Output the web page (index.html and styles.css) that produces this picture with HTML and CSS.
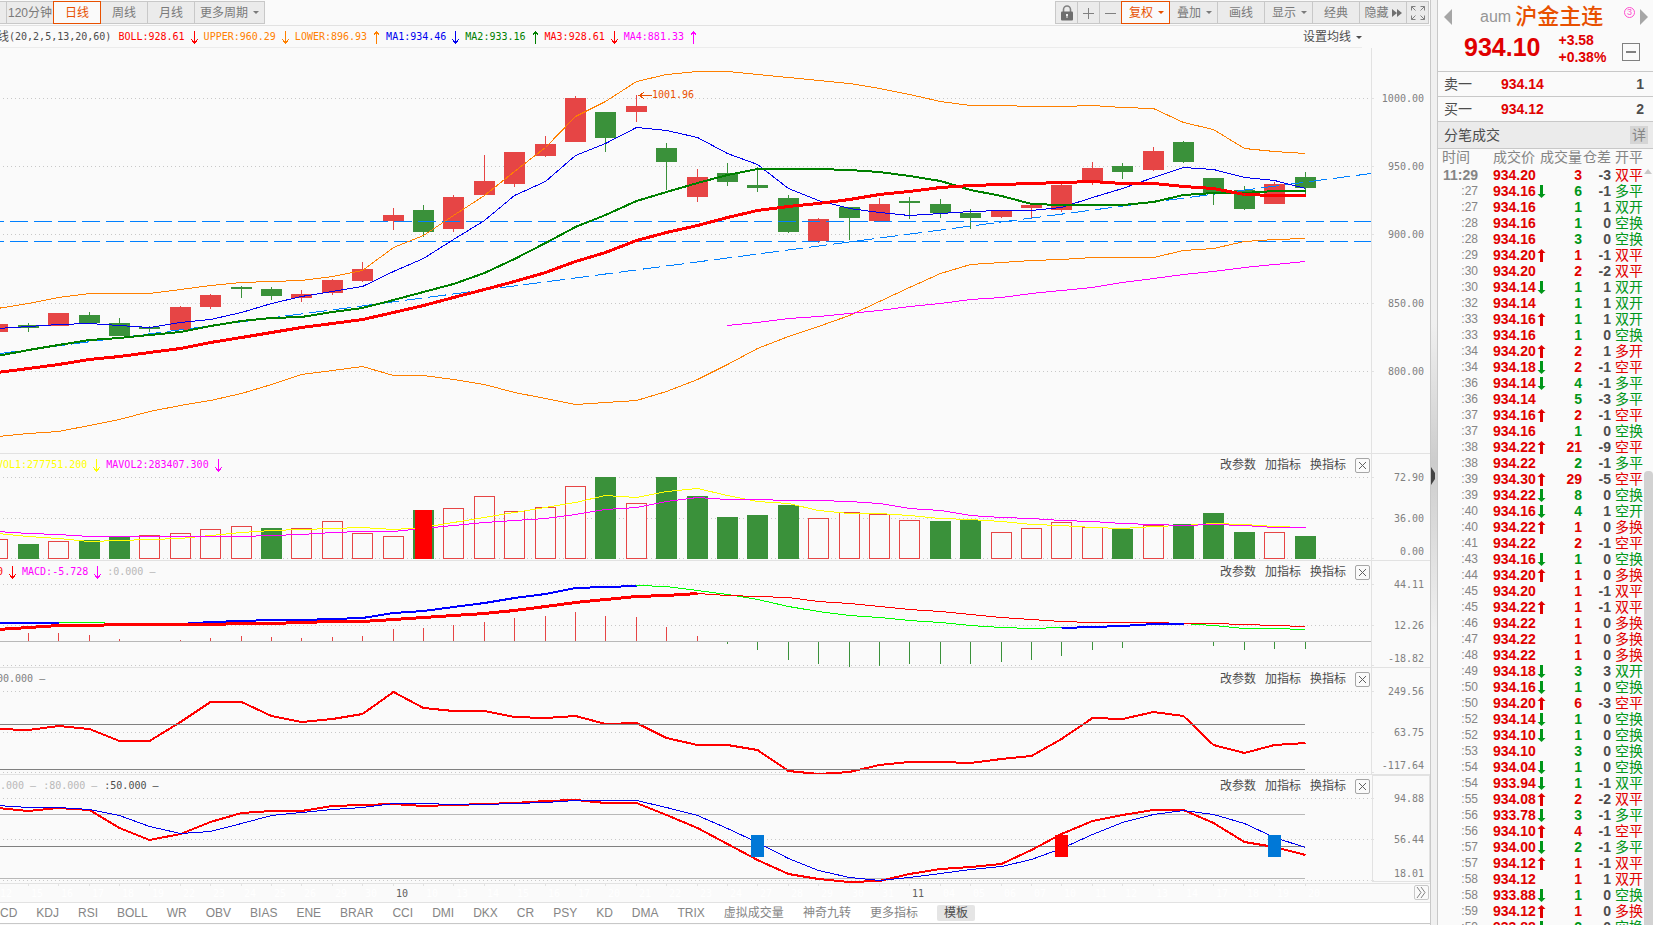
FILE: index.html
```html
<!DOCTYPE html>
<html lang="zh-CN">
<head>
    <meta charset="UTF-8">
    <meta name="viewport" content="width=device-width, initial-scale=1.0">
    <title>沪金主连 日线</title>
    <link rel="stylesheet" href="styles.css">
</head>
<body>
    <svg width="0" height="0" class="symbols">
        <symbol id="a-down" viewBox="0 0 7 13"><path d="M3.500 0v12M.5 8.500l3 4 3-4" fill="none" stroke="currentColor"/></symbol>
        <symbol id="a-up" viewBox="0 0 7 13"><path d="M3.500 1v12M.5 4.500l3-4 3 4" fill="none" stroke="currentColor"/></symbol>
    </svg>

    <main class="chart-area">
        <div class="toolbar">
            <div class="btn-group">
                <button class="btn btn-edge" aria-label="60分钟"></button>
                <button class="btn btn-text">120分钟</button>
                <button class="btn btn-text active">日线</button>
                <button class="btn btn-text">周线</button>
                <button class="btn btn-text">月线</button>
                <button class="btn btn-wide" aria-haspopup="true">更多周期<i class="caret"></i></button>
            </div>
            <div class="btn-group">
                <button class="btn btn-icon" aria-label="锁定">
                    <svg width="14" height="16" viewBox="0 0 14 16"><path d="M3.5 8V4.5a3.5 3.5 0 0 1 7 0V8" fill="none" stroke="#808080" stroke-width="1.6"/><rect x="1" y="6.5" width="12" height="9" rx="1" fill="#6e6e6e"/><path d="M6 9h2v2h-.5v2h-1v-2H6z" fill="#eee"/></svg>
                </button>
                <button class="btn btn-icon" aria-label="放大">
                    <svg width="12" height="12" viewBox="0 0 12 12"><path d="M0 6.5h11M5.5 1v11" stroke="#808080"/></svg>
                </button>
                <button class="btn btn-icon" aria-label="缩小">
                    <svg width="12" height="12" viewBox="0 0 12 12"><path d="M0 6.5h11" stroke="#808080"/></svg>
                </button>
                <button class="btn btn-menu active" aria-haspopup="true">复权<i class="caret"></i></button>
                <button class="btn btn-menu" aria-haspopup="true">叠加<i class="caret"></i></button>
                <button class="btn btn-text">画线</button>
                <button class="btn btn-menu" aria-haspopup="true">显示<i class="caret"></i></button>
                <button class="btn btn-text">经典</button>
                <button class="btn btn-text">隐藏<svg class="fast" width="10" height="8" viewBox="0 0 10 8"><path d="M0 0l5 4-5 4zM5 0l5 4-5 4z" fill="#707070"/></svg></button>
                <button class="btn btn-icon" aria-label="全屏">
                    <svg width="14" height="14" viewBox="0 0 14 14"><path d="M.5 4.500V.5h4M.5.5l4 4M9.500.5h4v4M13.500.5l-4 4M.5 9.500v4h4M.5 13.500l4-4M13.500 9.500v4h-4M13.500 13.500l-4-4" fill="none" stroke="#808080"/></svg>
                </button>
            </div>
        </div>

        <div class="legend main-legend">
            <div class="legend-items">
                <span class="dark params"><b class="cjk">线</b>(20,2,5,13,20,60)</span>
                <span class="red">BOLL:928.61<svg class="arr"><use href="#a-down"/></svg></span>
                <span class="orange">UPPER:960.29<svg class="arr"><use href="#a-down"/></svg></span>
                <span class="orange">LOWER:896.93<svg class="arr"><use href="#a-up"/></svg></span>
                <span class="blue">MA1:934.46<svg class="arr"><use href="#a-down"/></svg></span>
                <span class="green">MA2:933.16<svg class="arr"><use href="#a-up"/></svg></span>
                <span class="red">MA3:928.61<svg class="arr"><use href="#a-down"/></svg></span>
                <span class="magenta">MA4:881.33<svg class="arr"><use href="#a-up"/></svg></span>
            </div>
            <button class="link-btn ma-set" aria-haspopup="true">设置均线<i class="caret"></i></button>
        </div>

        <section class="panel">
            <svg class="plot plot-main" id="main"></svg>
        </section>

        <section class="panel">
            <div class="panel-head">
                <div class="legend-items cut">
                    <span class="yellow">VOL1:277751.200<svg class="arr"><use href="#a-down"/></svg></span>
                    <span class="magenta">MAVOL2:283407.300<svg class="arr"><use href="#a-down"/></svg></span>
                </div>
                <div class="tools">
                    <button class="link-btn">改参数</button>
                    <button class="link-btn">加指标</button>
                    <button class="link-btn">换指标</button>
                    <button class="close" aria-label="关闭"></button>
                </div>
            </div>
            <svg class="plot" id="vol"></svg>
        </section>

        <section class="panel">
            <div class="panel-head">
                <div class="legend-items cut">
                    <span class="red">0<svg class="arr"><use href="#a-down"/></svg></span>
                    <span class="magenta">MACD:-5.728<svg class="arr"><use href="#a-down"/></svg></span>
                    <span class="light">:0.000 –</span>
                </div>
                <div class="tools">
                    <button class="link-btn">改参数</button>
                    <button class="link-btn">加指标</button>
                    <button class="link-btn">换指标</button>
                    <button class="close" aria-label="关闭"></button>
                </div>
            </div>
            <svg class="plot" id="macd"></svg>
        </section>

        <section class="panel">
            <div class="panel-head">
                <div class="legend-items cut">
                    <span class="grey">00.000 –</span>
                </div>
                <div class="tools">
                    <button class="link-btn">改参数</button>
                    <button class="link-btn">加指标</button>
                    <button class="link-btn">换指标</button>
                    <button class="close" aria-label="关闭"></button>
                </div>
            </div>
            <svg class="plot" id="cci"></svg>
        </section>

        <section class="panel">
            <div class="panel-head">
                <div class="legend-items spaced">
                    <span class="light">.000 –</span>
                    <span class="light">:80.000 –</span>
                    <span class="dark">:50.000 –</span>
                </div>
                <div class="tools">
                    <button class="link-btn">改参数</button>
                    <button class="link-btn">加指标</button>
                    <button class="link-btn">换指标</button>
                    <button class="close" aria-label="关闭"></button>
                </div>
            </div>
            <svg class="plot plot-kdj" id="kdj"></svg>
        </section>

        <div class="date-axis">
            <svg class="plot plot-dates" id="dates"></svg>
            <button class="more" aria-label="更多">
                <svg width="11" height="11" viewBox="0 0 11 11"><path d="M1 0l4 5.500-4 5.500M5 0l4 5.500-4 5.500" fill="none" stroke="#808080"/></svg>
            </button>
        </div>

        <nav class="indicators">
            <a href="#">CD</a>
            <a href="#">KDJ</a>
            <a href="#">RSI</a>
            <a href="#">BOLL</a>
            <a href="#">WR</a>
            <a href="#">OBV</a>
            <a href="#">BIAS</a>
            <a href="#">ENE</a>
            <a href="#">BRAR</a>
            <a href="#">CCI</a>
            <a href="#">DMI</a>
            <a href="#">DKX</a>
            <a href="#">CR</a>
            <a href="#">PSY</a>
            <a href="#">KD</a>
            <a href="#">DMA</a>
            <a href="#">TRIX</a>
            <a href="#">虚拟成交量</a>
            <a href="#">神奇九转</a>
            <a href="#">更多指标</a>
            <button class="template">模板</button>
        </nav>
    </main>

    <div class="splitter">
        <svg width="5" height="18" viewBox="0 0 5 18"><path d="M0 0l4 6v6l-4 6z" fill="#444"/></svg>
    </div>

    <aside class="quote">
        <div class="quote-title">
            <button class="nav-btn" aria-label="上一个"><svg width="8" height="16" viewBox="0 0 8 16"><path d="M8 0v16L0 8z" fill="#a6a6a6"/></svg></button>
            <span class="code">aum</span>
            <h1>沪金主连</h1>
            <span class="badge">3</span>
            <button class="nav-btn" aria-label="下一个"><svg width="8" height="16" viewBox="0 0 8 16"><path d="M0 0v16l8-8z" fill="#a6a6a6"/></svg></button>
        </div>
        <div class="quote-price">
            <strong class="last">934.10</strong>
            <div class="change">
                <div>+3.58</div>
                <div>+0.38%</div>
            </div>
            <button class="collapse" aria-label="收起"></button>
        </div>
        <div class="level"><span>卖一</span><b>934.14</b><em>1</em></div>
        <div class="level"><span>买一</span><b>934.12</b><em>2</em></div>
        <div class="ticks-head"><span>分笔成交</span><button class="detail">详</button></div>
        <div class="ticks-body">
            <table class="ticks">
                <colgroup><col class="c-time"><col class="c-price"><col class="c-vol"><col class="c-diff"><col class="c-type"></colgroup>
                <thead>
                    <tr><th>时间</th><th>成交价</th><th>成交量</th><th>仓差</th><th>开平</th></tr>
                </thead>
                <tbody id="ticks"></tbody>
            </table>
            <div class="scroll"><i class="scroll-up"></i><div class="thumb"></div></div>
        </div>
    </aside>

    <script src="chart.js"></script>
</body>
</html>
```

FILE: styles.css
```css
* {
    box-sizing: border-box;
}

body {
    margin: 0;
    height: 100vh;
    display: flex;
    overflow: hidden;
    background: #fafafa;
    color: #4d4d4d;
    font-family: "Liberation Sans", "Noto Sans CJK SC", sans-serif;
    font-size: 12px;
    line-height: 16px;
}

button {
    margin: 0;
    padding: 0;
    border: none;
    background: none;
    color: inherit;
    font: inherit;
    cursor: pointer;
}

svg {
    display: block;
}

.symbols {
    position: absolute;
}

i,
em {
    font-style: normal;
}

/* Colours of the indicator lines */
.red { color: #ff0000; }
.orange { color: #ff8000; }
.blue { color: #0000f0; }
.green { color: #008000; }
.magenta { color: #ff00ff; }
.yellow { color: #ffff00; }
.light { color: #b8b8b8; }
.grey { color: #808080; }
.dark { color: #4d4d4d; }

/* Chart column */
.chart-area {
    flex: 1;
    min-width: 0;
    display: flex;
    flex-direction: column;
}

.toolbar {
    display: flex;
    justify-content: space-between;
    height: 26px;
    padding: 1px 1px 0 0;
    border-bottom: 1px solid #e2e2e2;
}

.btn-group {
    display: flex;
}

.btn {
    display: flex;
    align-items: center;
    justify-content: center;
    gap: 5px;
    height: 23px;
    margin-left: -1px;
    border: 1px solid #c8c8c8;
    background: #ebebeb;
    color: #7a7a7a;
    white-space: nowrap;
}

.btn.active {
    position: relative;
    border-color: #e85000;
    background: #fafafa;
    color: #e85000;
}

.btn-edge { width: 8px; }
.btn-text { width: 48px; }
.btn-wide { width: 71px; }
.btn-icon { width: 23px; }

.btn-menu {
    width: 49px;
    padding-left: 2px;
}

.btn-text {
    gap: 3px;
}

.caret {
    border: 3px solid transparent;
    border-top-color: currentColor;
    border-bottom: none;
}

.legend {
    display: flex;
    justify-content: space-between;
    align-items: center;
    height: 22px;
    margin-right: 68px;
    padding-top: 1px;
    border-bottom: 1px solid #ececec;
}

.legend-items {
    display: flex;
    font-family: "DejaVu Sans Mono", "Noto Sans CJK SC", monospace;
    font-size: 10px;
    white-space: pre;
}

.legend-items span {
    display: flex;
    align-items: center;
}

.legend-items.cut {
    margin-left: -3px;
}

.legend-items.spaced {
    gap: 7px;
}

.main-legend .legend-items {
    margin-left: -3px;
}

.legend-items .params {
    margin-right: 7px;
}

.cjk {
    font-size: 12px;
    font-weight: normal;
}

.arr {
    width: 7px;
    height: 13px;
    margin: 0 6px;
    shape-rendering: crispEdges;
}

.link-btn {
    display: flex;
    align-items: center;
    gap: 5px;
    white-space: nowrap;
}

.panel {
    position: relative;
    border-bottom: 1px solid #e2e2e2;
}

/* Sits over the top of the plot */
.panel-head {
    position: absolute;
    top: 3px;
    left: 0;
    right: 60px;
    display: flex;
    justify-content: space-between;
    align-items: center;
}

.tools {
    display: flex;
    align-items: center;
    gap: 9px;
}

.close {
    width: 15px;
    height: 15px;
    border: 1px solid #a6a6a6;
    border-radius: 2px;
    background:
        linear-gradient(45deg, transparent 46%, #606060 46% 54%, transparent 54%) center / 7px 7px no-repeat,
        linear-gradient(-45deg, transparent 46%, #606060 46% 54%, transparent 54%) center / 7px 7px no-repeat;
}

.plot {
    width: 100%;
    height: 106px;
    overflow: hidden;
    shape-rendering: crispEdges;
    font-family: "DejaVu Sans Mono", monospace;
    font-size: 10px;
}

.plot-main { height: 405px; }
.plot-kdj { height: 108px; }
.plot-dates { height: 18px; }

.axis-label { fill: #808080; text-anchor: end; }
.day { fill: #ffffff; }
.month { fill: #606060; }
.peak { fill: #e85000; }

.date-axis {
    position: relative;
    border-bottom: 1px solid #e2e2e2;
}

.more {
    position: absolute;
    top: 1px;
    right: 1px;
    width: 15px;
    height: 15px;
    padding: 1px;
    border: 1px solid #c8c8c8;
    border-radius: 2px;
}

.indicators {
    display: flex;
    align-items: center;
    gap: 19px;
    height: 21px;
    background: #ffffff;
    border-bottom: 1px solid #c8c8c8;
    white-space: nowrap;
}

.indicators a {
    color: #858585;
    text-decoration: none;
}

.template {
    padding: 0 7px;
    border-radius: 2px;
    background: #e5e5e5;
}

/* Drag bar between the chart and the quote */
.splitter {
    display: flex;
    align-items: center;
    width: 8px;
    padding-top: 27px;
    border: solid #c8c8c8;
    border-width: 0 1px;
    background: linear-gradient(#f0f0f0 35%, #cccccc 50%, #f0f0f0 68%);
}

/* Quote column */
.quote {
    display: flex;
    flex-direction: column;
    width: 215px;
    font-size: 14px;
}

.quote-title {
    display: flex;
    align-items: center;
    height: 34px;
    padding: 0 5px 0 6px;
}

.code {
    margin: 0 4px 0 28px;
    color: #969696;
    font-size: 16px;
}

h1 {
    margin: 0;
    color: #e85000;
    font-size: 22px;
    font-weight: 500;
    line-height: 30px;
}

.badge {
    width: 11px;
    height: 11px;
    margin: 0 5px 10px auto;
    border: 1px solid #ff50d0;
    border-radius: 50%;
    color: #ff50d0;
    font-size: 9px;
    line-height: 9px;
    text-align: center;
}

.quote-price {
    display: flex;
    align-items: center;
    height: 38px;
    padding: 0 13px 8px 26px;
    border-bottom: 1px solid #c8c8c8;
    color: #e00000;
}

.last {
    font-size: 25px;
    line-height: 20px;
    padding-bottom: 4px;
}

.change {
    margin-left: 18px;
    font-weight: bold;
    line-height: 17px;
}

.collapse {
    width: 18px;
    height: 18px;
    margin: 6px 0 0 auto;
    border: 1px solid #808080;
    background: linear-gradient(#808080, #808080) center / 10px 2px no-repeat;
}

.level {
    display: flex;
    align-items: center;
    height: 25px;
    padding: 0 9px 0 6px;
    border-bottom: 1px solid #c8c8c8;
}

.level span {
    width: 57px;
}

.level b {
    flex: 1;
    color: #e00000;
}

.level em {
    font-weight: bold;
}

.ticks-head {
    display: flex;
    align-items: center;
    justify-content: space-between;
    height: 27px;
    padding: 0 5px 0 6px;
    background: #ebebeb;
    border-bottom: 1px solid #c8c8c8;
}

.detail {
    width: 18px;
    height: 18px;
    background: #d5d5d5;
    color: #858585;
}

.ticks-body {
    flex: 1;
    min-height: 0;
    display: flex;
    overflow: hidden;
}

.ticks {
    width: 206px;
    height: max-content;
    table-layout: fixed;
    border-collapse: collapse;
}

.c-time { width: 40px; }
.c-price { width: 62px; }
.c-vol { width: 42px; }
.c-diff { width: 29px; }
.c-type { width: 33px; }

.ticks th,
.ticks td {
    height: 16px;
    padding: 0;
    line-height: 16px;
    text-align: right;
    white-space: nowrap;
}

.ticks th {
    height: 18px;
    color: #858585;
    font-weight: normal;
    vertical-align: top;
}

.ticks th:first-child {
    padding-right: 8px;
}

.ticks th:nth-child(2),
.ticks td:nth-child(2) {
    padding-left: 15px;
    text-align: left;
}

.ticks th:last-child,
.ticks td:last-child {
    padding-left: 4px;
    text-align: left;
}

.ticks td:first-child {
    color: #858585;
    font-size: 12px;
}

.ticks tr:first-child td:first-child {
    font-size: 14px;
    font-weight: bold;
}

.ticks td:nth-child(2),
.ticks td:nth-child(3),
.ticks td:nth-child(4) {
    font-weight: bold;
}

.ticks .up { color: #e00000; }
.ticks .down { color: #009619; }

.move {
    display: inline-block;
    margin-left: 1px;
    vertical-align: -2px;
}

.scroll {
    flex: 1;
    display: flex;
    flex-direction: column;
    justify-content: space-between;
    padding-top: 20px;
}

.scroll-up {
    width: 0;
    border: 4px solid transparent;
    border-top: none;
    border-bottom: 5px solid #c8c8c8;
}

.thumb {
    height: 60%;
    border-radius: 4px 4px 0 0;
    background: #d2d2d2;
}
```

FILE: chart.js
```js
const RED = '#e64545';
const GREEN = '#3a913a';
const STEP = 30.4;       // distance between two bars
const AXIS = 59;         // width of the value axis
const LAST = 66;         // from the last bar to the value axis
const COUNT = 44;

// colour, body top, body bottom, high, low
const candles = [
    ['r', 324, 332, 324, 332], ['g', 325, 328, 323, 332], ['r', 313, 326, 313, 326], ['g', 315, 323, 312, 323],
    ['g', 323, 336, 318, 336], ['g', 327, 329, 326, 332], ['r', 307, 330, 306, 330], ['r', 295, 307, 294, 309],
    ['g', 287, 289, 286, 298], ['g', 289, 296, 287, 300], ['r', 294, 298, 290, 302], ['r', 280, 293, 279, 295],
    ['r', 269, 281, 262, 282], ['r', 215, 221, 208, 230], ['g', 210, 232, 205, 237], ['r', 197, 229, 195, 232],
    ['r', 181, 195, 155, 195], ['r', 152, 184, 152, 187], ['r', 144, 156, 136, 157], ['r', 98, 142, 96, 142],
    ['g', 112, 138, 112, 152], ['r', 106, 112, 95, 122], ['g', 148, 162, 143, 190], ['r', 177, 197, 169, 202],
    ['g', 173, 182, 163, 186], ['g', 185, 188, 167, 192], ['g', 198, 232, 195, 233], ['r', 219, 241, 218, 243],
    ['g', 207, 218, 207, 240], ['r', 204, 221, 198, 221], ['g', 201, 203, 197, 219], ['g', 204, 213, 199, 218],
    ['g', 213, 218, 209, 229], ['r', 210, 217, 210, 218], ['r', 205, 208, 203, 218], ['r', 185, 210, 183, 212],
    ['r', 168, 181, 162, 185], ['g', 166, 172, 163, 179], ['r', 151, 170, 147, 171], ['g', 142, 162, 141, 163],
    ['g', 178, 193, 178, 205], ['g', 190, 209, 186, 210], ['r', 184, 204, 182, 204], ['g', 177, 188, 172, 195]
];

const upper = [308, 303, 297, 293, 293, 293, 289, 285, 282, 281, 280, 276, 270, 247, 235, 215, 195, 171, 147, 116, 101, 81,
    74, 71, 71, 74, 77, 80, 83, 88, 94, 101, 105, 105, 106, 106, 105, 107, 108, 122, 129, 148, 151, 153];
const lower = [436, 433, 431, 425, 419, 411, 405, 400, 393, 384, 374, 370, 366, 375, 375, 379, 384, 392, 398, 404, 402, 400,
    391, 379, 364, 348, 336, 326, 315, 301, 287, 273, 264, 262, 260, 259, 257, 257, 257, 250, 248, 241, 239, 238];
const ma1 = [328, 326, 324, 323, 325, 327, 322, 319, 312, 303, 296, 291, 286, 271, 258, 239, 220, 195, 181, 155, 143, 127,
    130, 137, 153, 164, 188, 200, 208, 212, 215, 213, 211, 210, 210, 207, 197, 188, 177, 167, 169, 177, 180, 188];
const ma2 = [355, 349, 344, 339, 337, 334, 331, 325, 320, 317, 316, 311, 307, 299, 291, 283, 272, 258, 242, 226, 214, 200,
    191, 182, 174, 168, 168, 168, 169, 171, 175, 180, 189, 195, 203, 204, 204, 204, 201, 194, 192, 192, 190, 190];
const ma3 = [372, 368, 364, 359, 356, 352, 348, 342, 337, 332, 327, 323, 319, 312, 305, 297, 289, 281, 272, 261, 252, 240,
    232, 225, 217, 210, 206, 203, 199, 194, 191, 187, 185, 184, 183, 182, 181, 183, 183, 186, 188, 194, 195, 195];
const ma4 = [325, 322, 318, 316, 313, 310, 306, 303, 299, 297, 293, 290, 287, 282, 278, 274, 271, 267, 264, 261];

const volumes = [
    ['r', 539], ['g', 544], ['r', 541], ['g', 540], ['g', 537], ['r', 535], ['r', 533], ['r', 529], ['r', 526], ['g', 528],
    ['r', 528], ['r', 521], ['r', 533], ['r', 536], ['g', 510], ['r', 508], ['r', 496], ['r', 511], ['r', 507], ['r', 486],
    ['g', 477], ['r', 503], ['g', 477], ['g', 496], ['g', 517], ['g', 515], ['g', 505], ['r', 518], ['r', 512], ['r', 514],
    ['r', 520], ['g', 521], ['g', 520], ['r', 532], ['r', 528], ['r', 522], ['r', 527], ['g', 529], ['r', 525], ['g', 524],
    ['g', 513], ['g', 532], ['r', 532], ['g', 536]
];
const vol1 = [533, 536, 538, 541, 540, 539, 538, 535, 532, 530, 529, 528, 527, 529, 527, 522, 517, 512, 507, 502, 495, 497,
    491, 488, 495, 501, 503, 510, 513, 513, 515, 518, 519, 521, 524, 525, 527, 528, 526, 525, 523, 524, 526, 527];
const vol2 = [531, 533, 534, 536, 536, 536, 536, 536, 536, 535, 534, 532, 531, 531, 528, 525, 522, 520, 518, 514, 509, 507,
    501, 497, 499, 499, 500, 500, 501, 503, 508, 510, 515, 517, 518, 520, 521, 523, 524, 525, 524, 525, 527, 527];

const dif = [622, 622, 622, 622, 623, 624, 623, 621, 620, 619, 619, 618, 617, 612, 610, 606, 602, 597, 593, 587, 586, 585,
    586, 590, 594, 599, 606, 611, 615, 617, 620, 622, 625, 627, 628, 627, 626, 625, 623, 623, 625, 628, 628, 629];
const dea = [629, 627, 625, 625, 624, 624, 624, 624, 623, 623, 622, 621, 621, 619, 617, 615, 613, 610, 606, 602, 599, 596,
    595, 593, 595, 596, 597, 601, 603, 606, 609, 611, 614, 617, 619, 621, 622, 622, 622, 623, 623, 624, 625, 626];
const hist = [641, 633, 633, 635, 639, 641, 640, 638, 636, 637, 638, 637, 636, 629, 628, 625, 622, 618, 616, 612, 616, 617,
    627, 636, 643, 649, 659, 663, 666, 665, 663, 663, 663, 661, 659, 655, 649, 647, 641, 641, 645, 649, 648, 648];

const cci = [728, 729, 725, 728, 740, 740, 721, 701, 701, 715, 721, 718, 713, 691, 707, 710, 710, 716, 717, 715, 723, 722,
    737, 744, 744, 749, 770, 773, 771, 764, 761, 761, 762, 758, 755, 738, 717, 718, 711, 715, 744, 752, 744, 742];

const kLine = [807, 810, 807, 809, 827, 839, 833, 821, 812, 810, 810, 805, 804, 803, 805, 804, 803, 802, 800, 799, 802, 802,
    814, 827, 843, 859, 873, 878, 881, 880, 873, 868, 866, 863, 849, 833, 820, 814, 809, 809, 822, 841, 846, 854];
const dLine = [805, 807, 807, 809, 815, 826, 833, 831, 823, 815, 812, 809, 807, 803, 803, 804, 804, 803, 802, 800, 800, 800,
    807, 815, 828, 842, 858, 870, 877, 880, 877, 873, 869, 866, 859, 848, 834, 822, 814, 810, 814, 823, 837, 847];

const dates = ['12', '15', '16', '17', '18', '19', '22', '23', '24', '25', '26', '29', '30', '10', '10', '13', '14', '15',
    '16', '17', '20', '21', '22', '23', '24', '27', '28', '29', '30', '31', '11', '04', '05', '06', '07', '10', '11', '12',
    '13', '14', '17', '18', '19', '20'];
const months = [13, 30];

// time, price, move, volume, change of open interest, type, side
const ticks = [
    ['11:29', '934.20', '', 3, -3, '双平', 'up'],
    [':27', '934.16', 'd', 6, -1, '多平', 'down'],
    [':27', '934.16', '', 1, 1, '双开', 'down'],
    [':28', '934.16', '', 1, 0, '空换', 'down'],
    [':28', '934.16', '', 3, 0, '空换', 'down'],
    [':29', '934.20', 'u', 1, -1, '双平', 'up'],
    [':30', '934.20', '', 2, -2, '双平', 'up'],
    [':30', '934.14', 'd', 1, 1, '双开', 'down'],
    [':32', '934.14', '', 1, 1, '双开', 'down'],
    [':33', '934.16', 'u', 1, 1, '双开', 'down'],
    [':33', '934.16', '', 1, 0, '空换', 'down'],
    [':34', '934.20', 'u', 2, 1, '多开', 'up'],
    [':34', '934.18', 'd', 2, -1, '空平', 'up'],
    [':36', '934.14', 'd', 4, -1, '多平', 'down'],
    [':36', '934.14', '', 5, -3, '多平', 'down'],
    [':37', '934.16', 'u', 2, -1, '空平', 'up'],
    [':37', '934.16', '', 1, 0, '空换', 'down'],
    [':38', '934.22', 'u', 21, -9, '空平', 'up'],
    [':38', '934.22', '', 2, -1, '多平', 'down'],
    [':39', '934.30', 'u', 29, -5, '空平', 'up'],
    [':39', '934.22', 'd', 8, 0, '空换', 'down'],
    [':40', '934.16', 'd', 4, 1, '空开', 'down'],
    [':40', '934.22', 'u', 1, 0, '多换', 'up'],
    [':41', '934.22', '', 2, -1, '空平', 'up'],
    [':43', '934.16', 'd', 1, 0, '空换', 'down'],
    [':44', '934.20', 'u', 1, 0, '多换', 'up'],
    [':45', '934.20', '', 1, -1, '双平', 'up'],
    [':45', '934.22', 'u', 1, -1, '双平', 'up'],
    [':46', '934.22', '', 1, 0, '多换', 'up'],
    [':47', '934.22', '', 1, 0, '多换', 'up'],
    [':48', '934.22', '', 1, 0, '多换', 'up'],
    [':49', '934.18', 'd', 3, 3, '双开', 'down'],
    [':50', '934.16', 'd', 1, 0, '空换', 'down'],
    [':50', '934.20', 'u', 6, -3, '空平', 'up'],
    [':52', '934.14', 'd', 1, 0, '空换', 'down'],
    [':52', '934.10', 'd', 1, 0, '空换', 'down'],
    [':53', '934.10', '', 3, 0, '空换', 'down'],
    [':54', '934.04', 'd', 1, 0, '空换', 'down'],
    [':54', '933.94', 'd', 1, -1, '双平', 'down'],
    [':55', '934.08', 'u', 2, -2, '双平', 'up'],
    [':56', '933.78', 'd', 3, -1, '多平', 'down'],
    [':56', '934.10', 'u', 4, -1, '空平', 'up'],
    [':57', '934.00', 'd', 2, -1, '多平', 'down'],
    [':57', '934.12', 'u', 1, -1, '双平', 'up'],
    [':58', '934.12', '', 1, 1, '双开', 'up'],
    [':58', '933.88', 'd', 1, 0, '空换', 'down'],
    [':59', '934.12', 'u', 1, 0, '多换', 'up'],
    [':59', '933.88', 'd', 2, 0, '空换', 'down']
];

let width, plotWidth;

function x(i) {
    return Math.floor(plotWidth - LAST - (COUNT - 1 - i) * STEP);
}

function rect(left, top, w, h, fill) {
    return `<rect x="${left}" y="${top}" width="${w}" height="${h}" fill="${fill}"/>`;
}

function hline(y, color, end) {
    return rect(0, y, end, 1, color);
}

function line(values, color, size, from = 0) {
    const shift = size === 2 ? 1 : 0.5;
    const points = values.map((v, i) => `${x(i + from) + 0.5},${v + shift}`).join(' ');
    return `<polyline points="${points}" fill="none" stroke="${color}" stroke-width="${size}"/>`;
}

// Dotted grid with its labels on the value axis
function grid(rows) {
    let out = rect(plotWidth, 0, 1, 775, '#e2e2e2');
    rows.forEach(([y, text, labelY = y]) => {
        out += `<path d="M3 ${y + 0.5}H${plotWidth}" stroke="#c8c8c8" stroke-dasharray="1 3"/>`;
        out += rect(plotWidth, y, 3, 1, '#e2e2e2');
        out += `<text class="axis-label" x="${width - 6}" y="${labelY + 4}">${text}</text>`;
    });
    return out;
}

// top is where the panel starts in the chart column
function render(id, top, content) {
    const svg = document.getElementById(id);
    svg.setAttribute('viewBox', `0 ${top} ${width} ${svg.clientHeight}`);
    svg.innerHTML = content;
}

function drawMain() {
    let out = grid([[98, '1000.00'], [166, '950.00'], [234, '900.00'], [303, '850.00'], [371, '800.00']]);
    candles.forEach(([c, top, bottom, high, low], i) => {
        const color = c === 'r' ? RED : GREEN;
        out += rect(x(i), high, 1, low - high, color) + rect(x(i) - 10, top, 21, bottom - top, color);
    });
    [221, 241].forEach(y => {
        out += `<path d="M-14 ${y + 0.5}H${plotWidth}" stroke="#0080ff" stroke-dasharray="18 6"/>`;
    });
    out += `<path d="M0 353.500L${plotWidth} 173.500" stroke="#0080ff" stroke-dasharray="18 6"/>`;
    out += line(upper, '#ff8000', 1) + line(lower, '#ff8000', 1) + line(ma1, '#0000f0', 1);
    out += line(ma4, '#ff00ff', 1, 24) + line(ma2, '#008000', 2) + line(ma3, '#ff0000', 3);
    const px = x(21) + 2;
    out += `<path d="M${px + 6} 92.500l-5 3 5 3M${px} 95.500h14" fill="none" stroke="#e85000"/>`;
    out += `<text class="peak" x="${px + 14}" y="98">1001.96</text>`;
    render('main', 48, out);
}

function drawVolume() {
    let out = grid([[477, '72.90'], [518, '36.00'], [558, '0.00', 551]]);
    volumes.forEach(([c, top], i) => {
        if (c === 'g') {
            out += rect(x(i) - 10, top, 21, 559 - top, GREEN);
        } else {
            out += `<rect x="${x(i) - 9.5}" y="${top + 0.5}" width="20" height="${558 - top}" fill="#fafafa" stroke="${RED}"/>`;
        }
    });
    out += line(vol1, '#ffff00', 1) + line(vol2, '#ff00ff', 1);
    out += rect(x(14) - 8, 510, 17, 49, '#ff0000');
    render('vol', 454, out);
}

function drawMacd() {
    let out = grid([[584, '44.11'], [625, '12.26'], [665, '-18.82', 658]]);
    out += hline(641, '#b8b8b8', plotWidth);
    hist.forEach((v, i) => {
        out += v < 641 ? rect(x(i), v, 1, 641 - v, RED) : rect(x(i), 642, 1, Math.max(0, v - 641), GREEN);
    });
    out += line(dif, '#00ff00', 1);
    out += line(dea.slice(23), '#ff0000', 1, 23);
    [[0, 2], [6, 21], [35, 39]].forEach(([a, b]) => {
        out += line(dif.slice(a, b + 1), '#0000ff', 2, a);
    });
    out += line(dea.slice(0, 24), '#ff0000', 3);
    render('macd', 561, out);
}

function drawCci() {
    let out = grid([[691, '249.56'], [732, '63.75'], [772, '-117.64', 765]]);
    out += line(cci, '#ff0000', 2);
    out += hline(724, '#808080', x(43)) + hline(769, '#808080', x(43));
    render('cci', 668, out);
}

function drawKdj() {
    let out = grid([[798, '94.88'], [839, '56.44'], [880, '18.01', 873]]);
    out += hline(814, '#b8b8b8', x(43)) + hline(846, '#808080', x(43)) + hline(878, '#b8b8b8', x(43));
    out += line(kLine, '#ff0000', 2) + line(dLine, '#0000f0', 1);
    out += rect(x(25) - 6, 835, 13, 22, '#0078d7') + rect(x(35) - 6, 835, 13, 22, '#ff0000');
    out += rect(x(42) - 6, 835, 13, 22, '#0078d7');
    out += `<rect x="${plotWidth + 1}" y="775.500" width="${AXIS - 2}" height="106" fill="none" stroke="#e2e2e2"/>`;
    render('kdj', 775, out);
}

function drawDates() {
    let out = '';
    dates.forEach((d, i) => {
        out += rect(x(i), 884, 1, 2, '#e2e2e2');
        out += `<text class="${months.includes(i) ? 'month' : 'day'}" x="${x(i) + 3}" y="897">${d}</text>`;
    });
    render('dates', 884, out);
}

function drawAll() {
    width = document.getElementById('main').clientWidth;
    plotWidth = width - AXIS;
    drawMain();
    drawVolume();
    drawMacd();
    drawCci();
    drawKdj();
    drawDates();
}

function arrow(move) {
    if (!move) return '';
    const d = move === 'u' ? 'M4.500 0l4 4H6v9H3V4H.5z' : 'M4.500 13l4-4H6V0H3v9H.5z';
    return `<svg class="move ${move === 'u' ? 'up' : 'down'}" width="9" height="13" viewBox="0 0 9 13"><path d="${d}" fill="currentColor"/></svg>`;
}

document.getElementById('ticks').innerHTML = ticks.map(([time, price, move, vol, diff, type, side]) =>
    `<tr><td>${time}</td><td class="up">${price}${arrow(move)}</td><td class="${side}">${vol}</td><td>${diff}</td><td class="${side}">${type}</td></tr>`
).join('');

drawAll();
window.addEventListener('resize', drawAll);
```
